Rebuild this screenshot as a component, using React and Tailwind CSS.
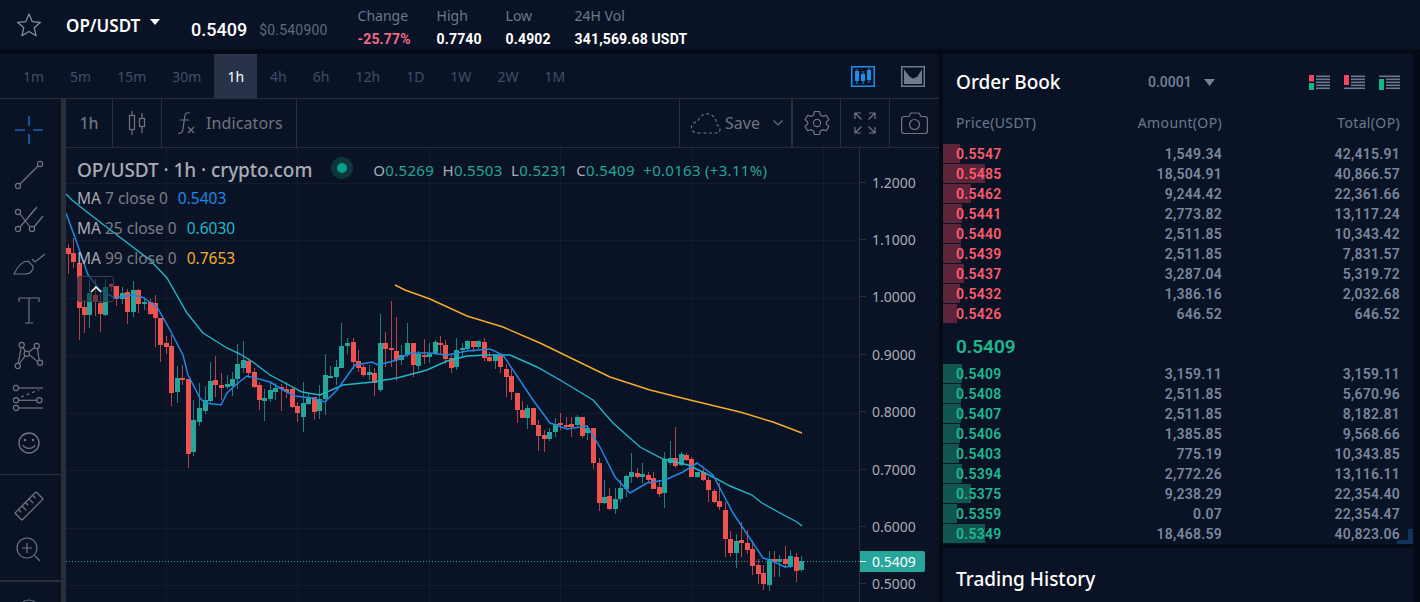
import React from "react";

const grp = (ox, oy, s, rows) =>
  rows.map(([x, t, b, wt, wb, c]) => ({ x: Math.round(ox + x / s), t: oy + t / s, b: oy + b / s, wt: oy + wt / s, wb: oy + wb / s, c }));

const candles = [
  ...grp(0, 200, 3, [
    [204,144,162,132,222,"r"],[220,160,185,115,205,"r"],[236,190,323,155,420,"r"],[253,320,345,300,400,"r"],
    [268,278,345,240,383,"g"],[285,285,302,238,348,"r"],[301,308,343,280,395,"r"],[316,262,345,238,347,"g"],
    [333,252,262,250,275,"r"],[349,258,298,258,318,"r"],[366,280,296,262,312,"g"],[382,277,335,268,372,"r"],
    [400,270,335,243,350,"g"],[415,270,312,268,340,"r"],[432,306,312,290,330,"g"],[449,306,342,298,345,"r"],
  ]),
  ...grp(150, 330, 3, [
    [15,-80,-35,-105,50,"r"],[31,-35,45,-35,95,"r"],[48,40,50,18,72,"r"],[64,48,188,15,228,"r"],
    [82,144,186,108,218,"g"],[97,144,150,105,165,"r"],[113,148,372,148,413,"r"],[130,270,365,210,377,"g"],
    [146,234,276,160,288,"g"],[164,210,243,168,252,"g"],[179,153,212,97,220,"g"],[196,150,165,78,200,"r"],
    [212,165,174,130,210,"r"],[230,162,172,135,178,"g"],[245,147,168,125,197,"g"],[262,102,147,42,177,"g"],
  ]),
  ...grp(240, 290, 3, [
    [8,210,233,153,250,"g"],[25,212,248,203,265,"r"],[41,247,291,235,295,"r"],[58,285,330,275,360,"r"],
    [73,323,332,297,392,"g"],[89,300,327,277,335,"g"],[106,293,305,280,330,"g"],[122,291,297,282,362,"r"],
    [138,296,305,277,325,"r"],[155,297,351,295,355,"r"],[172,348,369,335,395,"r"],[188,339,380,277,425,"g"],
    [205,323,342,310,345,"g"],[221,321,365,320,390,"r"],[238,327,362,285,386,"g"],[254,255,327,193,375,"g"],
    [271,258,263,228,262,"g"],[287,231,260,210,285,"g"],[304,168,233,99,233,"g"],[320,160,167,145,192,"g"],
    [338,156,215,145,238,"r"],[353,213,233,180,245,"r"],[369,232,255,220,262,"r"],[386,246,255,225,270,"g"],
    [402,249,279,235,317,"r"],[419,159,300,72,305,"g"],[435,159,177,127,230,"r"],[452,174,179,33,230,"r"],
    [467,183,209,80,272,"r"],[484,195,209,165,225,"g"],[501,159,194,100,200,"g"],[518,159,225,158,260,"r"],
    [534,192,227,182,240,"g"],[551,195,201,148,222,"r"],[567,192,200,160,220,"g"],[584,156,190,150,195,"g"],
    [600,159,165,138,195,"r"],[616,165,207,150,222,"r"],[632,205,233,195,250,"r"],[648,180,231,145,240,"g"],
    [665,175,179,160,200,"g"],[681,153,176,150,180,"g"],[698,153,171,152,185,"r"],[714,153,171,150,178,"g"],
    [732,156,203,144,212,"r"],[748,200,212,185,216,"r"],[765,196,212,195,236,"g"],[781,198,230,195,248,"r"],
    [798,237,260,222,322,"r"],[814,258,305,237,330,"r"],[831,308,359,308,398,"r"],[847,360,385,332,385,"r"],
    [861,354,385,345,418,"g"],[878,353,404,353,405,"r"],[894,405,437,390,482,"r"],
  ]),
  ...grp(500, 400, 3, [
    [131,106,116,90,155,"r"],[147,96,118,85,122,"g"],[164,72,97,55,110,"g"],[180,68,76,40,90,"r"],
    [197,75,80,50,85,"r"],[213,72,82,50,110,"r"],[230,52,75,45,85,"g"],[246,52,108,52,115,"r"],
    [262,85,100,75,120,"g"],[279,85,190,85,208,"r"],[296,190,308,175,332,"r"],[312,292,308,240,312,"g"],
    [327,288,327,265,330,"r"],[345,298,327,265,342,"g"],[361,265,298,240,305,"g"],[378,229,268,225,290,"g"],
    [394,217,232,160,250,"g"],[411,220,232,205,235,"r"],[427,222,231,190,250,"g"],[444,225,240,215,250,"r"],
    [460,234,267,215,268,"r"],[477,262,281,240,290,"r"],[493,178,278,155,323,"g"],[510,175,190,123,195,"g"],
    [526,175,197,80,205,"r"],[543,162,194,155,197,"g"],[559,165,180,160,182,"r"],[574,177,231,172,232,"r"],
    [592,217,232,215,235,"g"],[608,217,240,205,242,"r"],[625,240,270,230,305,"r"],[641,272,306,268,308,"r"],
    [658,304,322,250,330,"r"],[674,330,417,305,470,"r"],[690,418,459,393,470,"r"],[707,424,458,402,505,"g"],
    [723,420,429,367,470,"r"],[740,429,450,390,462,"r"],[757,447,498,420,525,"r"],[773,496,522,477,552,"r"],
    [790,520,552,495,570,"r"],[806,478,555,453,573,"g"],[822,477,485,452,530,"r"],[838,478,485,465,530,"g"],
    [855,478,492,438,505,"r"],[871,468,498,450,505,"g"],[887,472,513,460,545,"r"],[904,483,510,468,515,"g"],
  ]),
];

const ma7 = "66,213 77,243 88,275 100,290 115,298 133,295 142,297 157,307 170,330 183,355 188,375 200,398 205,403 221,405 227,393 238,383 247,376 270,382 283,390 295,396 312,398 325,402 337,390 355,365 372,362 378,365 397,360 410,353 430,353 447,355 467,351 490,349 503,355 523,385 533,400 550,423 567,429 587,426 600,447 615,477 630,493 647,483 665,480 683,472 697,463 713,475 733,513 753,543 763,558 770,560 785,567 793,566";
const ma25 = "66,194 72,200 87,212 113,232 150,260 167,278 187,313 203,333 227,348 240,354 253,362 270,375 302,392 320,395 343,385 373,382 397,378 427,370 447,361 467,356 487,355 510,355 537,367 560,380 593,400 613,423 640,447 663,459 688,465 713,477 730,486 752,495 762,503 780,513 797,522 802,526";
const ma99 = "395,285 405,290 430,299 467,316 503,327 540,343 575,360 610,377 650,390 690,400 740,412 773,422 802,433";

const asks = [
  ["0.5547","1,549.34","42,415.91",17],["0.5485","18,504.91","40,866.57",42],["0.5462","9,244.42","22,361.66",28],
  ["0.5441","2,773.82","13,117.24",19],["0.5440","2,511.85","10,343.42",18],["0.5439","2,511.85","7,831.57",18],
  ["0.5437","3,287.04","5,319.72",21],["0.5432","1,386.16","2,032.68",17],["0.5426","646.52","646.52",14],
];
const bids = [
  ["0.5409","3,159.11","3,159.11",19],["0.5408","2,511.85","5,670.96",18],["0.5407","2,511.85","8,182.81",18],
  ["0.5406","1,385.85","9,568.66",17],["0.5403","775.19","10,343.85",16],["0.5394","2,772.26","13,116.11",19],
  ["0.5375","9,238.29","22,354.40",28],["0.5359","0.07","22,354.47",14],["0.5349","18,468.59","40,823.06",42],
];

const frames = ["1m","5m","15m","30m","1h","4h","6h","12h","1D","1W","2W","1M"];
const prices = ["1.2000","1.1000","1.0000","0.9000","0.8000","0.7000","0.6000","0.5000"];

const Stat = ({ label, value, cls, w }) => (
  <div className={`flex flex-col ${w}`}>
    <span className="text-[14px] leading-[20px] text-[#6b7890] font-['Noto_Sans',sans-serif]">{label}</span>
    <span className={`text-[14px] leading-[26px] font-bold tracking-[0.15px] font-['Roboto',sans-serif] ${cls}`}>{value}</span>
  </div>
);

const Row = ({ d, side }) => (
  <div className="relative h-[20px] flex items-center px-[13px] text-[14px] font-semibold tracking-[0.25px] font-['Roboto',sans-serif] text-[#7b859d]">
    <div className={`absolute left-0 top-0 h-[19px] ${side === "a" ? "bg-[#5e2439]" : "bg-[#11564f]"}`} style={{ width: d[3] }} />
    <span className={`relative w-[100px] ${side === "a" ? "text-[#ff5b6e]" : "text-[#1cb990]"}`}>{d[0]}</span>
    <span className="relative w-[166px] text-right">{d[1]}</span>
    <span className="relative flex-1 text-right">{d[2]}</span>
  </div>
);

const Tool = ({ h = "h-[45px]", children }) => (
  <div className={`${h} pr-[3px] flex items-center justify-center shrink-0`}>
    <svg width="34" height="34" viewBox="0 0 34 34" fill="none" stroke="#6f7480" strokeWidth="1.2">{children}</svg>
  </div>
);

const BookIcon = ({ a, b }) => (
  <svg width="21" height="15" viewBox="0 0 21 15">
    {a && <rect x="0" y="0" width="5" height={b ? 6.5 : 10} fill="#f0465c" />}
    {b && <rect x="0" y={a ? 8 : 4} width="5" height={a ? 7 : 11} fill="#12b886" />}
    {[0.5, 3.5, 6.5, 9.5, 12.5].map((y) => (
      <rect key={y} x="7" y={y} width="14" height="1.6" fill="#6b7890" />
    ))}
    {!a && <rect x="0" y="0.5" width="7" height="1.6" fill="#6b7890" />}
    {!b && <rect x="0" y="12.5" width="7" height="1.6" fill="#6b7890" />}
  </svg>
);

export default function App() {
  return (
    <div className="w-[1420px] h-[602px] overflow-hidden bg-[#040a16] flex flex-col font-['Noto_Sans',sans-serif]">
      {/* Header */}
      <header className="h-[49px] shrink-0 bg-[#0a1325] flex items-center">
        <svg className="ml-[16px] mr-[24px]" width="26" height="26" viewBox="0 0 26 26" fill="none" stroke="#8b93a3" strokeWidth="1.2" strokeLinejoin="round">
          <path d="M13 2 L16.2 9.6 L24.5 10.3 L18.2 15.7 L20.1 23.8 L13 19.5 L5.9 23.8 L7.8 15.7 L1.5 10.3 L9.8 9.6 Z" />
        </svg>
        <span className="text-[17px] font-semibold text-white w-[84px] mt-[2px]">OP/USDT</span>
        <svg className="-mt-[6px]" width="10" height="6" viewBox="0 0 10 6"><path d="M0 0 H10 L5 6 Z" fill="#fff" /></svg>
        <span className="ml-[31px] text-[18px] font-medium text-white font-['Roboto',sans-serif] mt-[9px]">0.5409</span>
        <span className="ml-[12px] text-[14px] text-[#5c6a80] font-['Roboto',sans-serif] mt-[11px] tracking-[0.2px]">$0.540900</span>
        <div className="ml-[30px] flex self-start mt-[6px]">
          <Stat label="Change" value="-25.77%" cls="text-[#ee6a85]" w="w-[79px]" />
          <Stat label="High" value="0.7740" cls="text-white" w="w-[69px]" />
          <Stat label="Low" value="0.4902" cls="text-white" w="w-[69px]" />
          <Stat label="24H Vol" value="341,569.68 USDT" cls="text-white" w="w-[140px]" />
        </div>
      </header>

      <main className="flex mt-[5px] gap-[4px] h-[548px]">
        {/* Left column */}
        <section className="w-[939px] shrink-0 flex flex-col bg-[#0a1325]">
          {/* Timeframes */}
          <div className="h-[45px] shrink-0 border-b border-[#2a2e39] flex items-stretch pl-[10px] pr-[14px] text-[14px] text-[#3f4f6b]">
            {frames.map((f) => (
              <div key={f} className={`px-[13px] flex items-center ${f === "1h" ? "bg-[#28334a] text-white" : ""}`}>{f}</div>
            ))}
            <div className="ml-auto flex items-center gap-[26px]">
              <svg width="24" height="21" viewBox="0 0 24 21">
                <rect x="0.75" y="0.75" width="22.5" height="19.5" fill="none" stroke="#1f8fe8" strokeWidth="1.5" />
                <g fill="#1f8fe8">
                  <rect x="4" y="5" width="4" height="10" /><rect x="5.5" y="3" width="1" height="15" />
                  <rect x="10" y="8" width="4" height="7" /><rect x="11.5" y="5" width="1" height="13" />
                  <rect x="16" y="4" width="4" height="10" /><rect x="17.5" y="2" width="1" height="15" />
                </g>
              </svg>
              <svg width="24" height="21" viewBox="0 0 24 21">
                <rect x="0.75" y="0.75" width="22.5" height="19.5" fill="none" stroke="#6f7a8e" strokeWidth="1.5" />
                <path d="M3 3.5 L9 11 L12 12.5 L16 11 L21 3.5 V18 H3 Z" fill="#6f7a8e" />
              </svg>
            </div>
          </div>

          <div className="flex flex-1 min-h-0">
            {/* Tools */}
            <aside className="w-[61px] shrink-0 flex flex-col pt-[8px] overflow-hidden">
              <Tool>
                <g stroke="#1565c0" strokeWidth="1.6"><path d="M3 17 H13 M21 17 H31 M17 3 V13 M17 21 V31" /></g>
              </Tool>
              <Tool>
                <circle cx="6" cy="28" r="2.6" /><circle cx="28" cy="6" r="2.6" /><path d="M8 26 L26 8" />
              </Tool>
              <Tool>
                <circle cx="6" cy="9" r="2.6" /><circle cx="6" cy="26" r="2.6" /><circle cx="20" cy="26" r="2.6" />
                <path d="M8 11 L18 24 M8 24 L25 4 M22 24 L31 13 M14 17 L23 6" />
              </Tool>
              <Tool>
                <path d="M2 26 C5 20 10 13 16 13 L21 18 C22 22 18 26 14 26 Z" />
                <path d="M20 11 L23 14 L33 6" />
              </Tool>
              <Tool>
                <path d="M7 5 H27 V9 M7 5 V9 M17 5 V30 M13 30 H21" />
              </Tool>
              <Tool h="h-[44px]">
                <circle cx="9.7" cy="8" r="2.6" /><circle cx="24.7" cy="9" r="2.6" /><circle cx="14.7" cy="16.7" r="2.6" />
                <circle cx="5.7" cy="29" r="2.6" /><circle cx="28" cy="25.7" r="2.6" />
                <path d="M10.8 10.3 L13.6 14.4 M22.7 10.6 L16.7 15.1 M9.2 10.6 L6.2 26.4 M7.2 26.9 L13.2 18.8 M25.4 11.5 L27.3 23.2 M17.2 17.8 L25.6 24.6" />
              </Tool>
              <Tool h="h-[44px]">
                <circle cx="4" cy="7" r="2.6" /><path d="M7 7 H31" />
                <circle cx="4" cy="19.3" r="2.6" /><circle cx="27.3" cy="19.3" r="2.6" /><path d="M7 19.3 H24.7" />
                <circle cx="4" cy="27" r="2.6" /><path d="M7 27 H31" />
                <path d="M9 16 L27 9" strokeDasharray="3 3" />
              </Tool>
              <Tool>
                <circle cx="17" cy="17" r="10" strokeWidth="1.4" /><circle cx="13" cy="14" r="1.2" fill="#6f7480" stroke="none" /><circle cx="21" cy="14" r="1.2" fill="#6f7480" stroke="none" />
                <path d="M11 19 C13 23.5 21 23.5 23 19" />
              </Tool>
              <div className="h-px bg-[#2a2e39] shrink-0 mt-[9px]" />
              <Tool h="h-[62px]">
                <g transform="rotate(-45 17 17)">
                  <rect x="2" y="12" width="30" height="10" rx="1" strokeWidth="1.3" />
                  <path d="M7 12 V16 M12 12 V18 M17 12 V16 M22 12 V18 M27 12 V16" />
                </g>
              </Tool>
              <Tool h="h-[25px]">
                <circle cx="15" cy="15" r="10" /><path d="M15 10 V20 M10 15 H20 M23 23 L28 28" />
              </Tool>
              <div className="h-[2px] bg-[#2a2e39] shrink-0 mt-[18px]" />
              <div className="flex justify-center pr-[3px] mt-[16px]">
                <svg width="24" height="24" viewBox="0 0 24 24" fill="none" stroke="#6f7480" strokeWidth="1.2"><circle cx="12" cy="12" r="10" /></svg>
              </div>
            </aside>
            <div className="w-[5px] shrink-0 bg-[#2a2e39]" />

            {/* Chart */}
            <div className="flex-1 min-w-0 flex flex-col">
              <div className="h-[49px] shrink-0 border-b border-[#2a2e39] flex items-stretch text-[#6f7480]">
                <div className="w-[47px] border-r border-[#2a2e39] flex items-center justify-center text-[16px] font-medium">1h</div>
                <div className="w-[49px] border-r border-[#2a2e39] flex items-center justify-center">
                  <svg width="20" height="26" viewBox="0 0 20 26" fill="none" stroke="#6f7480" strokeWidth="1.2">
                    <rect x="2.5" y="5.5" width="5" height="14" /><path d="M5 1 V5 M5 20 V25" />
                    <rect x="12.5" y="8.5" width="5" height="8" /><path d="M15 3 V8 M15 17 V23" />
                  </svg>
                </div>
                <div className="w-[135px] border-r border-[#2a2e39] flex items-center pl-[15px] gap-[9px] text-[16px] tracking-[0.1px]">
                  <svg width="20" height="24" viewBox="0 0 20 24" fill="none" stroke="#6f7480" strokeWidth="1.2">
                    <path d="M13 2 C9 1 8 3 7.5 7 L6 18 C5.5 22 3.5 23 1 22 M3 9 H12 M11 16 L17 22 M17 16 L11 22" />
                  </svg>
                  <span>Indicators</span>
                </div>
                <div className="ml-auto w-[114px] border-l border-r-2 border-[#2a2e39] flex items-center pl-[10px] text-[16px]">
                  <svg width="32" height="22" viewBox="0 0 32 22" fill="none" stroke="#6f7480" strokeWidth="1.2" strokeDasharray="3 2.5">
                    <path d="M8 21 H27 C31 21 31 14 27 13 C27 6 21 1 16 2 C12 2 9 6 8 9 C3 10 0 15 2 18 C3 20 5 21 8 21 Z" />
                  </svg>
                  <span className="ml-[3px]">Save</span>
                  <svg className="ml-[13px]" width="10" height="6" viewBox="0 0 10 6" fill="none" stroke="#6f7480" strokeWidth="1.1"><path d="M0.5 0.5 L5 5 L9.5 0.5" /></svg>
                </div>
                <div className="w-[48px] border-r border-[#2a2e39] flex items-center justify-center">
                  <svg width="26" height="26" viewBox="0 0 26 26" fill="none" stroke="#6f7480" strokeWidth="1.2">
                    <circle cx="13" cy="13" r="3.6" />
                    <path d="M10.5 1.5 H15.5 L16.3 5 L19 6.4 L22.4 5.2 L24.9 9.6 L22.3 12 V14 L24.9 16.4 L22.4 20.8 L19 19.6 L16.3 21 L15.5 24.5 H10.5 L9.7 21 L7 19.6 L3.6 20.8 L1.1 16.4 L3.7 14 V12 L1.1 9.6 L3.6 5.2 L7 6.4 L9.7 5 Z" strokeLinejoin="round" />
                  </svg>
                </div>
                <div className="w-[49px] border-r border-[#2a2e39] flex items-center justify-center">
                  <svg width="22" height="22" viewBox="0 0 22 22" fill="none" stroke="#6f7480" strokeWidth="1.2">
                    <path d="M1 7 V1 H7 M1 1 L7.5 7.5 M15 1 H21 V7 M21 1 L14.5 7.5 M1 15 V21 H7 M1 21 L7.5 14.5 M15 21 H21 V15 M21 21 L14.5 14.5" />
                  </svg>
                </div>
                <div className="w-[49px] flex items-center justify-center">
                  <svg width="27" height="23" viewBox="0 0 27 23" fill="none" stroke="#6f7480" strokeWidth="1.2">
                    <path d="M3 4.5 H8 L10 1 H18 L20 4.5 H24 A2.4 2.4 0 0 1 26.4 7 V19 A2.4 2.4 0 0 1 24 21.5 H3 A2.4 2.4 0 0 1 0.6 19 V7 A2.4 2.4 0 0 1 3 4.5 Z" />
                    <circle cx="13.5" cy="12.5" r="5" />
                  </svg>
                </div>
              </div>

              <div className="flex-1 min-h-0 flex">
                <div className="relative w-[793px] shrink-0 overflow-hidden">
                  <svg className="absolute left-0 top-0" width="793" height="454" viewBox="66 148 793 454">
                    <g stroke="#141c2c" strokeWidth="1">
                      {[166, 297, 429, 560, 692, 823].map((x) => <line key={x} x1={x + 0.5} x2={x + 0.5} y1="148" y2="602" />)}
                      {[183, 240, 298, 355, 413, 470, 528, 585].map((y) => <line key={y} x1="66" x2="859" y1={y + 0.5} y2={y + 0.5} />)}
                    </g>
                    <line x1="66" x2="859" y1="561.5" y2="561.5" stroke="#26a69a" strokeWidth="1" strokeDasharray="1 2" />
                    {candles.map((c, i) => {
                      const col = c.c === "r" ? "#ef5350" : "#26a69a";
                      return (
                        <g key={i} fill={col} shapeRendering="crispEdges">
                          <rect x={c.x} y={c.wt} width="1" height={c.wb - c.wt} opacity="0.75" />
                          <rect x={c.x - 2} y={c.t} width="5" height={Math.max(c.b - c.t, 1)} />
                        </g>
                      );
                    })}
                    <polyline points={ma99} fill="none" stroke="#f5ac27" strokeWidth="1.4" />
                    <polyline points={ma25} fill="none" stroke="#1fb6c9" strokeWidth="1.4" />
                    <polyline points={ma7} fill="none" stroke="#1e88e5" strokeWidth="1.5" />
                  </svg>

                  {/* Legend */}
                  <div className="relative pl-[11px] text-[#a9acb6]">
                    <div className="h-[44px] -mb-[8px] flex items-center text-[19px] font-medium">
                      <span className="whitespace-pre tracking-[-0.08px]">OP/USDT · 1h · crypto.com</span>
                      <span className="ml-[19px] w-[22px] h-[22px] rounded-full bg-[#0f3539] flex items-center justify-center -mt-[4px]">
                        <span className="w-[10px] h-[10px] rounded-full bg-[#00a08a]" />
                      </span>
                      <span className="ml-[20px] text-[15px] font-normal tracking-[0.3px] whitespace-pre">
                        O<span className="text-[#26a69a]">0.5269</span>  H<span className="text-[#26a69a]">0.5503</span>  L<span className="text-[#26a69a]">0.5231</span>  C<span className="text-[#26a69a]">0.5409</span>  <span className="text-[#26a69a]">+0.0163 (+3.11%)</span>
                      </span>
                    </div>
                    {[
                      ["MA", " 7 close 0", "0.5403", "text-[#1e88e5]"],
                      ["MA", " 25 close 0", "0.6030", "text-[#1fb6c9]"],
                      ["MA", " 99 close 0", "0.7653", "text-[#f5ac27]"],
                    ].map(([a, b, v, cls]) => (
                      <div key={v} className="h-[30px] flex items-center text-[15.5px]">
                        <span className="whitespace-pre">{a}<span className="text-[#7b7e88]">{b}</span></span>
                        <span className={`ml-[10px] ${cls}`}>{v}</span>
                      </div>
                    ))}
                    <div className="mt-[2px] w-[37px] h-[26px] border border-[#3a4050] rounded-[3px] bg-[#0a1325]/50 flex items-center justify-center">
                      <svg width="12" height="8" viewBox="0 0 12 8" fill="none" stroke="#fff" strokeWidth="1.5"><path d="M1 7 L6 2 L11 7" /></svg>
                    </div>
                  </div>
                </div>

                {/* Price axis */}
                <div className="relative flex-1 border-l border-[#2a2e39] flex flex-col pt-[5.5px] text-[14px] text-[#a9acb6]">
                  {prices.map((p) => (
                    <div key={p} className="h-[57.4px] shrink-0 flex items-center">
                      <span className="w-[6px] h-px bg-[#2a2e39]" />
                      <span className="ml-[6px]">{p}</span>
                    </div>
                  ))}
                  <div className="absolute left-0 top-[403px] w-[65px] h-[21px] bg-[#26a69a] rounded-r-[2px] flex items-center text-white">
                    <span className="w-[6px] h-px bg-white" />
                    <span className="ml-[6px]">0.5409</span>
                  </div>
                </div>
              </div>
            </div>
          </div>
        </section>

        {/* Right column */}
        <section className="w-[470px] shrink-0 flex flex-col gap-[4px]">
          <div className="relative h-[490px] shrink-0 bg-[#0a1325] flex flex-col">
            <div className="h-[56px] shrink-0 flex items-center pl-[13px] pr-[13px]">
              <h2 className="text-[19px] font-medium text-white w-[192px]">Order Book</h2>
              <span className="text-[14px] font-medium text-[#74819c] font-['Roboto',sans-serif]">0.0001</span>
              <svg className="ml-[12px]" width="11" height="7" viewBox="0 0 11 7"><path d="M0 0 H11 L5.5 7 Z" fill="#74819c" /></svg>
              <div className="ml-auto flex gap-[14px]">
                <BookIcon a b />
                <BookIcon a />
                <BookIcon b />
              </div>
            </div>
            <div className="h-[24px] shrink-0 flex items-center px-[13px] text-[14px] tracking-[0.35px] text-[#6b7890]">
              <span className="w-[100px]">Price(USDT)</span>
              <span className="w-[166px] text-right">Amount(OP)</span>
              <span className="flex-1 text-right">Total(OP)</span>
            </div>
            <div className="mt-[10px]">
              {asks.map((d) => <Row key={d[0]} d={d} side="a" />)}
            </div>
            <div className="h-[40px] shrink-0 flex items-center pl-[13px] pt-[6px] text-[19px] font-semibold text-[#1cb990] font-['Roboto',sans-serif]">0.5409</div>
            <div>
              {bids.map((d) => <Row key={d[0]} d={d} side="b" />)}
            </div>
            <div className="absolute right-0 bottom-0 w-[16px] h-[15px] border-r-[5px] border-b-[4px] border-[#12325a]" />
          </div>
          <div className="flex-1 bg-[#0a1325] pl-[13px] pt-[18px]">
            <h2 className="text-[19px] font-medium text-white leading-[26px]">Trading History</h2>
          </div>
        </section>
      </main>
    </div>
  );
}
